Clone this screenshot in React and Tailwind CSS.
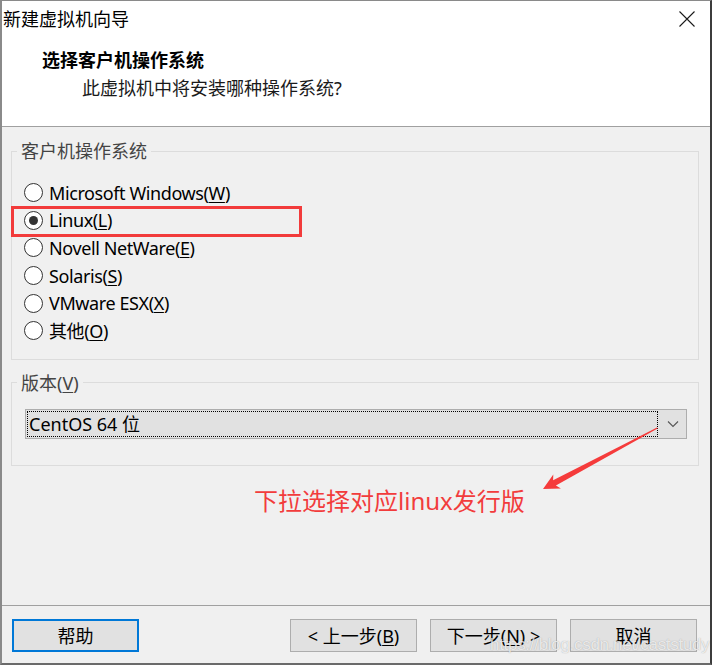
export default function App() {
  const radios = [
    { pre: 'Microsoft Windows(', key: 'W', checked: false },
    { pre: 'Linux(', key: 'L', checked: true },
    { pre: 'Novell NetWare(', key: 'E', checked: false },
    { pre: 'Solaris(', key: 'S', checked: false },
    { pre: 'VMware ESX(', key: 'X', checked: false },
    { pre: '其他(', key: 'O', checked: false },
  ];
  return (
    <div className="relative w-[712px] h-[665px] box-border flex flex-col bg-[#f0f0f0] border-l-2 border-t border-r-2 border-b-2 border-l-[#8a8a8a] border-t-[#8a8a8a] border-r-[#3c3c3c] border-b-[#6a6a6a] text-[18px] leading-[24px] text-black [font-family:'Noto_Sans','Noto_Sans_CJK_SC',sans-serif] overflow-hidden">
      {/* header */}
      <div className="h-[126px] shrink-0 bg-white border-b border-[#a0a0a0] flex flex-col">
        <div className="h-[35px] flex items-center justify-between pl-[1px] pr-[15px]">
          <span>新建虚拟机向导</span>
          <svg width="16" height="16" viewBox="0 0 16 16">
            <path d="M0.5 0.5L15.5 15.5M15.5 0.5L0.5 15.5" stroke="#1a1a1a" strokeWidth="1.1" fill="none" />
          </svg>
        </div>
        <div className="mt-[12px] pl-[40px] font-bold">选择客户机操作系统</div>
        <div className="mt-[4px] pl-[80px] text-[#1a1a1a]">此虚拟机中将安装哪种操作系统?</div>
      </div>

      {/* body */}
      <div className="flex-1 flex flex-col pl-[9px] pr-[11px]">
        <fieldset className="mt-[12px] border border-[#dcdcdc]">
          <legend className="ml-[5px] px-[4px] text-[#444]">客户机操作系统</legend>
          <div className="pl-[12px] pt-[16px] pb-[14px]">
            {radios.map((r) => (
              <div key={r.key} className="h-[27.6px] flex items-center">
                <span className="w-[19px] h-[19px] rounded-full border border-[#333] bg-white flex items-center justify-center shrink-0">
                  {r.checked && <span className="w-[9px] h-[9px] rounded-full bg-[#333]" />}
                </span>
                <span className="ml-[6px] tracking-[-0.4px]">
                  {r.pre}
                  <u className="underline-offset-[2px]">{r.key}</u>)
                </span>
              </div>
            ))}
          </div>
        </fieldset>

        <fieldset className="mt-[11px] border border-[#dcdcdc] pt-[14px] pb-[26px]">
          <legend className="ml-[5px] px-[4px] text-[#444]">
            版本(<u className="underline-offset-[2px]">V</u>)
          </legend>
          <div className="ml-[13px] mr-[11px] h-[30px] flex border border-[#adadad] bg-[#e1e1e1]">
            <div className="flex-1 m-[1px] border border-dotted border-black flex items-center pl-[1px]">
              CentOS 64 位
            </div>
            <div className="w-[27px] flex items-center justify-center">
              <svg width="12" height="8" viewBox="0 0 12 8">
                <path d="M1 1.5L6 6.5L11 1.5" stroke="#555" strokeWidth="1.1" fill="none" />
              </svg>
            </div>
          </div>
        </fieldset>

        <div className="mt-[19px] pl-[243px] text-[24px] leading-[32px] text-[#f23c3c]">
          下拉选择对应linux发行版
        </div>
      </div>

      {/* footer */}
      <div className="h-[58px] shrink-0 border-t border-[#a0a0a0] flex items-start pt-[13px] pl-[10px] pr-[13px]">
        <div className="w-[127px] h-[33px] border-2 border-[#0078d7] bg-[#e1e1e1] flex items-center justify-center">
          帮助
        </div>
        <div className="flex-1" />
        <div className="flex gap-[13px]">
          <div className="w-[127px] h-[33px] border border-[#adadad] bg-[#e1e1e1] flex items-center justify-center">
            &lt; 上一步(<u className="underline-offset-[2px]">B</u>)
          </div>
          <div className="w-[127px] h-[33px] border border-[#adadad] bg-[#e1e1e1] flex items-center justify-center">
            下一步(<u className="underline-offset-[2px]">N</u>) &gt;
          </div>
          <div className="w-[127px] h-[33px] border border-[#adadad] bg-[#e1e1e1] flex items-center justify-center">
            取消
          </div>
        </div>
      </div>

      {/* annotations */}
      <div className="absolute left-[9px] top-[205px] w-[291px] h-[31px] border-[3px] border-[#f23b3b] pointer-events-none" />
      <svg className="absolute left-[-2px] top-[-1px] pointer-events-none" width="712" height="665" viewBox="0 0 712 665">
        <polygon
          points="657,427.5 657.6,428.6 555.9,485.5 560.9,488.5 543,489 553.3,474.4 553.1,480.3"
          fill="#f53b3b"
        />
      </svg>
      <div className="absolute left-[488px] top-[632px] text-[17px] leading-[24px] tracking-[-0.3px] text-white/75 [font-family:'Liberation_Sans',sans-serif] [text-shadow:0_0_1px_rgba(90,90,90,0.5)] pointer-events-none">
        https://blog.csdn.net/caststudy
      </div>
    </div>
  );
}
